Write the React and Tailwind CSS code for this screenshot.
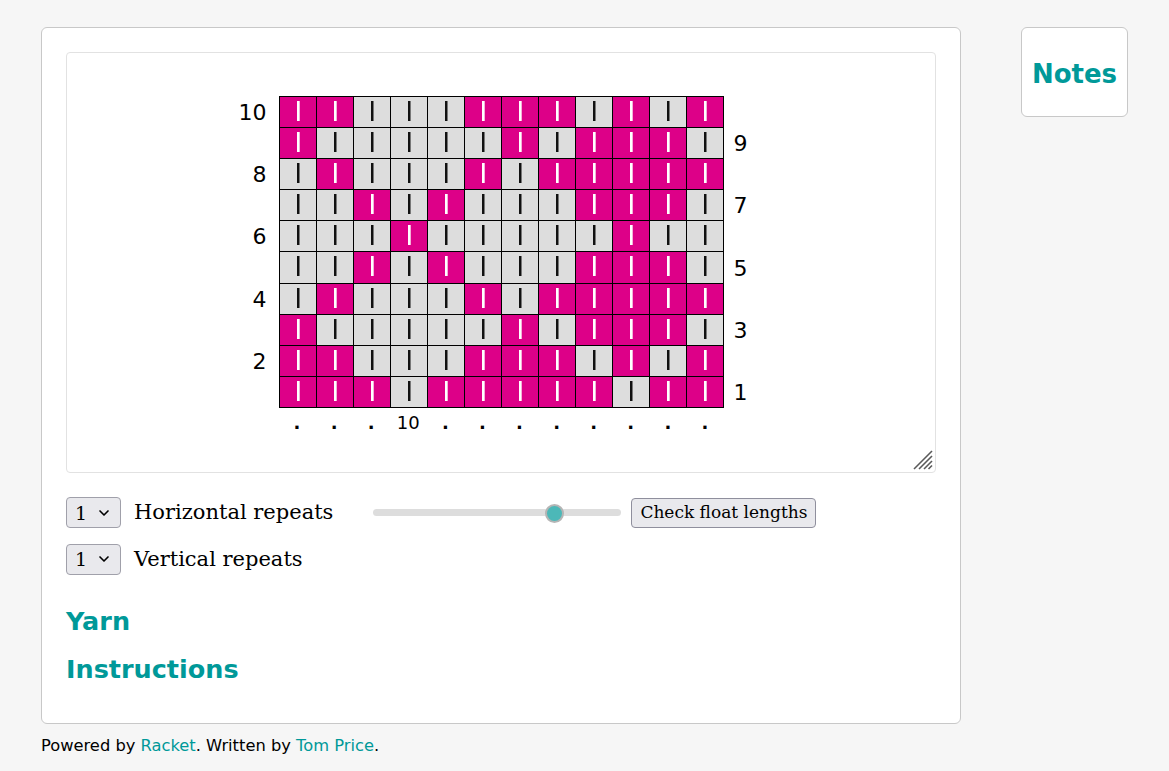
import { ChevronDown } from 'lucide-react';

const PATTERN = [
  'PPGGGPPPGPGP', // row 10
  'PGGGGGPGPPPG',
  'GPGGGPGPPPPP',
  'GGPGPGGGPPPG',
  'GGGPGGGGGPGG',
  'GGPGPGGGPPPG',
  'GPGGGPGPPPPP',
  'PGGGGGPGPPPG',
  'PPGGGPPPGPGP',
  'PPPGPPPPPGPP', // row 1
];

const sans = { fontFamily: '"DejaVu Sans", Verdana, sans-serif' };
const serif = { fontFamily: '"DejaVu Serif", Georgia, serif' };

const Cell = ({ pink }) => (
  <div className={`h-[30.1px] flex justify-center ${pink ? 'bg-[#dd0088]' : 'bg-[#dddddd]'}`}>
    <div className={`mt-[4px] w-[2px] h-[20px] ${pink ? 'bg-white shadow-[1px_0_0_#f4b0d8]' : 'bg-[#111] shadow-[1px_0_0_#777]'}`} />
  </div>
);

const Chart = () => (
  <div className="flex justify-center" style={sans}>
    <div className="w-[44px] flex flex-col pt-px">
      {PATTERN.map((_, i) => {
        const n = 10 - i;
        return (
          <div key={i} className="h-[31.1px] flex items-center justify-end pr-[12px] text-[22px] text-black">
            {n % 2 === 0 ? n : ''}
          </div>
        );
      })}
    </div>
    <div>
      <div className="grid grid-cols-12 gap-px bg-black border border-black w-[445px]">
        {PATTERN.map((row, r) =>
          row.split('').map((c, i) => <Cell key={`${r}-${i}`} pink={c === 'P'} />)
        )}
      </div>
      <div className="grid grid-cols-12 w-[445px] mt-[3px] text-[18px] text-black">
        {Array.from({ length: 12 }).map((_, i) => (
          <div key={i} className="text-center leading-[24px]">{i === 3 ? '10' : <span className="font-bold">.</span>}</div>
        ))}
      </div>
    </div>
    <div className="w-[44px] flex flex-col pt-px">
      {PATTERN.map((_, i) => {
        const n = 10 - i;
        return (
          <div key={i} className="h-[31.1px] flex items-center pl-[10px] text-[22px] text-black">
            {n % 2 === 1 ? n : ''}
          </div>
        );
      })}
    </div>
  </div>
);

const Select = () => (
  <div className="w-[55px] h-[31px] flex items-center justify-between pl-[8px] pr-[8px] rounded-[4px] border border-[#a0a0aa] bg-[#e9e9ed] text-[19px] text-black" style={serif}>
    <span>1</span>
    <ChevronDown className="w-[16px] h-[16px]" strokeWidth={2.5} />
  </div>
);

const Slider = () => (
  <div className="relative w-[248px] h-[20px] flex items-center">
    <div className="w-full h-[7px] rounded-full bg-[#dddddd]" />
    <div className="absolute left-[172px] top-[1px] w-[19px] h-[19px] rounded-full bg-[#4cb8b8] border-2 border-[#b5b5b5]" />
  </div>
);

const ResizeHandle = () => (
  <svg className="absolute right-[2px] bottom-[2px]" width="22" height="22" viewBox="0 0 22 22">
    <g stroke="#5a5a5a" strokeWidth="1.6">
      <line x1="21" y1="3" x2="3" y2="21" />
      <line x1="21" y1="8" x2="8" y2="21" />
      <line x1="21" y1="13" x2="13" y2="21" />
      <line x1="21" y1="17.5" x2="17.5" y2="21" />
    </g>
  </svg>
);

export default function App() {
  return (
    <div className="min-h-screen bg-[#f6f6f6] pl-[41px] pt-[27px]">
      <div className="flex items-start gap-[60px]">
        <div className="w-[920px] h-[697px] bg-white border border-[#c8c8c8] rounded-[6px] p-6">
          <div className="relative h-[421px] bg-white border border-[#e2e2e2] rounded-[4px] pt-[43px]">
            <Chart />
            <ResizeHandle />
          </div>

          <div className="mt-[24px] flex items-center" style={serif}>
            <Select />
            <span className="ml-[13px] text-[21px] text-black">Horizontal repeats</span>
            <div className="ml-[40px]">
              <Slider />
            </div>
            <button className="ml-[10px] h-[30px] px-[8px] rounded-[4px] border border-[#8f8f9d] bg-[#e9e9ed] text-[17px] text-black" style={serif}>
              Check float lengths
            </button>
          </div>

          <div className="mt-[15px] flex items-center" style={serif}>
            <Select />
            <span className="ml-[13px] text-[21px] text-black">Vertical repeats</span>
          </div>

          <h2 className="mt-[30px] text-[25.5px] font-bold text-[#009999] leading-[32px]" style={sans}>Yarn</h2>
          <h2 className="mt-[16px] text-[25.5px] font-bold text-[#009999] leading-[32px]" style={sans}>Instructions</h2>
        </div>

        <div className="w-[107px] h-[90px] bg-white border border-[#c8c8c8] rounded-[6px] flex items-center justify-center pt-[4px]">
          <span className="text-[26px] font-bold text-[#009999]" style={sans}>Notes</span>
        </div>
      </div>

      <footer className="mt-[10px] text-[16.3px] text-black" style={sans}>
        Powered by <a className="text-[#009999]">Racket</a>. Written by <a className="text-[#009999]">Tom Price</a>.
      </footer>
    </div>
  );
}
